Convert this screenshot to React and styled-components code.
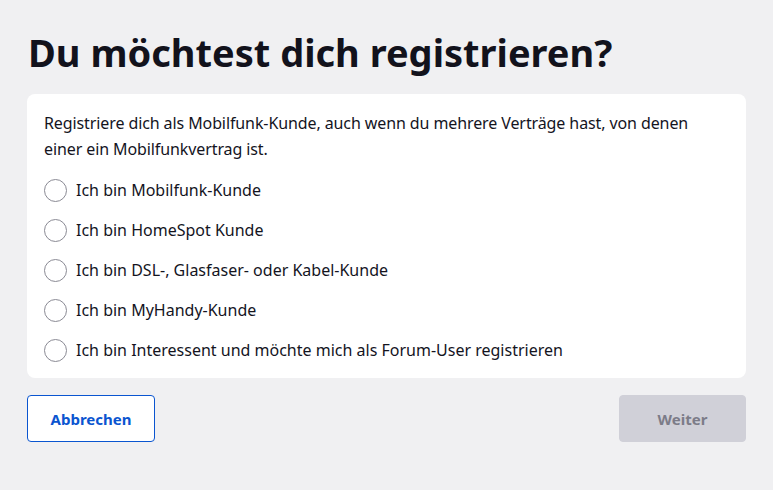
import React, { useState } from "react";
import styled, { createGlobalStyle } from "styled-components";

const Global = createGlobalStyle`
  html, body { margin: 0; padding: 0; background: #f0f0f2; }
  body { font-family: "Noto Sans", "Open Sans", sans-serif; color: #14141e; }
  * { box-sizing: border-box; }
`;

const Page = styled.div`
  width: 773px;
  min-height: 490px;
  padding: 29px 27px 0 27px;
  display: flex;
  flex-direction: column;
`;

const Title = styled.h1`
  margin: 0 0 0 1px;
  font-size: 38px;
  line-height: 47px;
  font-weight: 700;
  letter-spacing: 0;
  color: #12121c;
`;

const Card = styled.div`
  margin-top: 18px;
  background: #ffffff;
  border-radius: 8px;
  padding: 16px 17px 8px 17px;
  display: flex;
  flex-direction: column;
`;

const Intro = styled.p`
  margin: 0 0 8px 0;
  font-size: 16px;
  line-height: 26px;
  letter-spacing: -0.1px;
  color: #14141e;
`;

const Option = styled.label`
  display: flex;
  align-items: center;
  gap: 9px;
  height: 40px;
  font-size: 16px;
  color: #14141e;
  cursor: pointer;
`;

const Radio = styled.span`
  width: 23px;
  height: 23px;
  border-radius: 50%;
  border: 1px solid ${(p) => (p.$checked ? "#0050d0" : "#8a8a94")};
  background: #fff;
  flex-shrink: 0;
  display: flex;
  align-items: center;
  justify-content: center;
  &::after {
    content: "";
    width: 11px;
    height: 11px;
    border-radius: 50%;
    background: ${(p) => (p.$checked ? "#0050d0" : "transparent")};
  }
`;

const Actions = styled.div`
  margin-top: 17px;
  display: flex;
  justify-content: space-between;
`;

const Button = styled.button`
  height: 47px;
  min-width: ${(p) => p.$w}px;
  border-radius: 4px;
  font-family: inherit;
  font-size: 15px;
  font-weight: 700;
  border: 1px solid ${(p) => (p.$primary ? "#d0d0d8" : "#0a55d0")};
  background: ${(p) => (p.$primary ? "#d0d0d8" : "#ffffff")};
  color: ${(p) => (p.$primary ? "#7c7c88" : "#0a55d0")};
  cursor: ${(p) => (p.$primary ? "default" : "pointer")};
`;

const options = [
  "Ich bin Mobilfunk-Kunde",
  "Ich bin HomeSpot Kunde",
  "Ich bin DSL-, Glasfaser- oder Kabel-Kunde",
  "Ich bin MyHandy-Kunde",
  "Ich bin Interessent und möchte mich als Forum-User registrieren",
];

export default function App() {
  const [sel, setSel] = useState(null);
  return (
    <>
      <Global />
      <Page>
        <Title>Du möchtest dich registrieren?</Title>
        <Card>
          <Intro>
            Registriere dich als Mobilfunk-Kunde, auch wenn du mehrere Verträge hast, von denen
            <br />
            einer ein Mobilfunkvertrag ist.
          </Intro>
          {options.map((o, i) => (
            <Option key={o} onClick={() => setSel(i)}>
              <Radio $checked={sel === i} />
              {o}
            </Option>
          ))}
        </Card>
        <Actions>
          <Button $w={128}>Abbrechen</Button>
          <Button $primary $w={127}>Weiter</Button>
        </Actions>
      </Page>
    </>
  );
}
